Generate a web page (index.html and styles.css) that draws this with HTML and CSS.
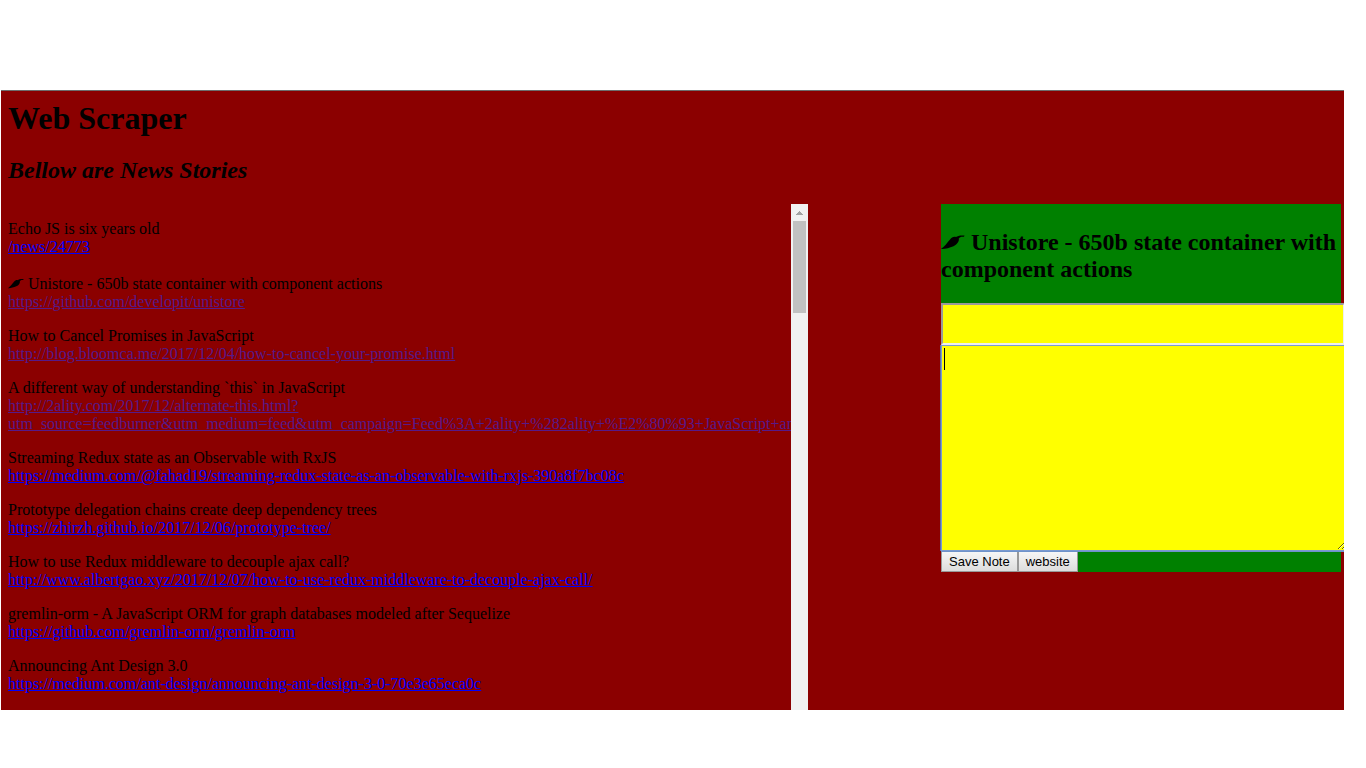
FILE: index.html
```
<!DOCTYPE html>
<html lang="en">
<head>
<meta charset="utf-8">
<title>Web Scraper</title>
<link rel="stylesheet" href="styles.css">
</head>
<body>
<svg class="defs" aria-hidden="true">
  <symbol id="pepper" viewBox="0 0 24 16">
    <path d="M0 15C3.500 12.500 6 9 9 5.500C10.800 3.200 12.500 2.400 15 3C16.500 1.800 19 1.200 23.500 1.500L23 2.800C20.500 2.500 18.800 3 17.800 4.500C18.400 7.500 16 10.500 12.500 12.300C8.500 14 4 15.200 0 15Z"/>
  </symbol>
</svg>
<main class="page">
  <h1 class="title">Web Scraper</h1>
  <h2 class="subtitle">Bellow are News Stories</h2>
  <div class="columns">
    <section class="stories" aria-label="News stories">
      <div class="stories-list">
        <p class="story">Echo JS is six years old<br><a class="link" href="#">/news/24773</a></p>
        <p class="story story-tall"><svg class="pepper"><use href="#pepper"/></svg> Unistore - 650b state container with component actions<br><a class="link visited" href="#">https://github.com/developit/unistore</a></p>
        <p class="story">How to Cancel Promises in JavaScript<br><a class="link visited" href="#">http://blog.bloomca.me/2017/12/04/how-to-cancel-your-promise.html</a></p>
        <p class="story">A different way of understanding `this` in JavaScript<br><a class="link visited" href="#">http://2ality.com/2017/12/alternate-this.html?<br>utm_source=feedburner&amp;utm_medium=feed&amp;utm_campaign=Feed%3A+2ality+%282ality+%E2%80%93+JavaScript+an</a></p>
        <p class="story">Streaming Redux state as an Observable with RxJS<br><a class="link" href="#">https://medium.com/@fahad19/streaming-redux-state-as-an-observable-with-rxjs-390a8f7bc08c</a></p>
        <p class="story">Prototype delegation chains create deep dependency trees<br><a class="link" href="#">https://zhirzh.github.io/2017/12/06/prototype-tree/</a></p>
        <p class="story">How to use Redux middleware to decouple ajax call?<br><a class="link" href="#">http://www.albertgao.xyz/2017/12/07/how-to-use-redux-middleware-to-decouple-ajax-call/</a></p>
        <p class="story">gremlin-orm - A JavaScript ORM for graph databases modeled after Sequelize<br><a class="link" href="#">https://github.com/gremlin-orm/gremlin-orm</a></p>
        <p class="story">Announcing Ant Design 3.0<br><a class="link" href="#">https://medium.com/ant-design/announcing-ant-design-3-0-70e3e65eca0c</a></p>
      </div>
      <div class="scrollbar" aria-hidden="true">
        <svg class="scroll-arrow" viewBox="0 0 17 17"><path d="M8 7h1v1h1v1h1v1h1v1H5v-1h1V9h1V8h1z"/></svg>
        <div class="scroll-thumb"></div>
      </div>
    </section>
    <section class="notes" aria-label="Notes">
      <h2 class="notes-title"><svg class="pepper pepper-large"><use href="#pepper"/></svg> Unistore - 650b state container with component actions</h2>
      <input class="note-title" type="text" aria-label="Note title">
      <div class="note-wrap"><textarea class="note-body" aria-label="Note"></textarea></div>
      <div class="actions"><button class="button" type="button">Save Note</button><button class="button" type="button">website</button></div>
    </section>
  </div>
</main>
</body>
</html>
```
FILE: styles.css
```
body {
  margin: 0;
  background: #fff;
  color: #000;
  font: 16px/18px "Liberation Serif", "Times New Roman", serif;
}
.defs {
  position: absolute;
  width: 0;
  height: 0;
}
.page {
  margin: 90px 22px 58px 1px;
  padding: 8px 3px 0 7px;
  border-top: 1px solid #6d6d6d;
  background: #8b0000;
  overflow: hidden;
}
.title {
  margin: 0 0 20px;
  font-size: 32px;
  line-height: 38px;
}
.subtitle {
  margin: 0 0 20px;
  font-size: 24px;
  line-height: 27px;
  font-style: italic;
}
.columns {
  display: flex;
  justify-content: space-between;
  align-items: flex-start;
}
.stories {
  display: flex;
  width: 60%;
}
.stories-list {
  flex: 1;
  min-width: 0;
  padding-bottom: 1px;
  overflow: hidden;
  white-space: nowrap;
}
.story {
  margin: 16px 0;
}
.story-tall {
  padding-top: 3px;
}
.link {
  color: #00f;
}
.visited {
  color: #551a8b;
}
.pepper {
  width: 16px;
  height: 11px;
  vertical-align: 0;
}
.pepper-large {
  width: 24px;
  height: 16px;
}
.scrollbar {
  width: 17px;
  background: #f1f1f1;
}
.scroll-arrow {
  display: block;
  width: 17px;
  height: 17px;
  fill: #a3a3a3;
}
.scroll-thumb {
  height: 92px;
  margin: 0 2px;
  background: #c1c1c1;
}
.notes {
  width: 400px;
  background: #008000;
}
.notes-title {
  margin: 0;
  padding: 25px 0 20px;
  font-size: 24px;
  line-height: 27px;
}
.note-title {
  display: block;
  box-sizing: border-box;
  width: 404px;
  height: 42px;
  padding: 0;
  border: 2px solid;
  border-color: #9a9a9a #eee #eee #9a9a9a;
  background: #ff0;
  font-size: 20px;
}
.note-wrap {
  position: relative;
  width: 406px;
}
.note-wrap::after {
  content: "";
  position: absolute;
  top: 3px;
  left: 3px;
  width: 1px;
  height: 22px;
  background: #000;
}
.note-body {
  display: block;
  box-sizing: border-box;
  width: 406px;
  height: 206px;
  padding: 2px;
  border: 1px solid #7a9ad0;
  outline: none;
  box-shadow: -1px 0 0 #5b6fa8, 0 1px 0 #6f93c9;
  background: #ff0;
  font-size: 20px;
}
.actions {
  display: flex;
}
.button {
  height: 21px;
  padding: 0 7px;
  border: 1px solid #999;
  border-radius: 0;
  background: linear-gradient(#f6f6f6, #ddd);
  color: #000;
  font: 13px/15px "Liberation Sans", Arial, sans-serif;
}
```
